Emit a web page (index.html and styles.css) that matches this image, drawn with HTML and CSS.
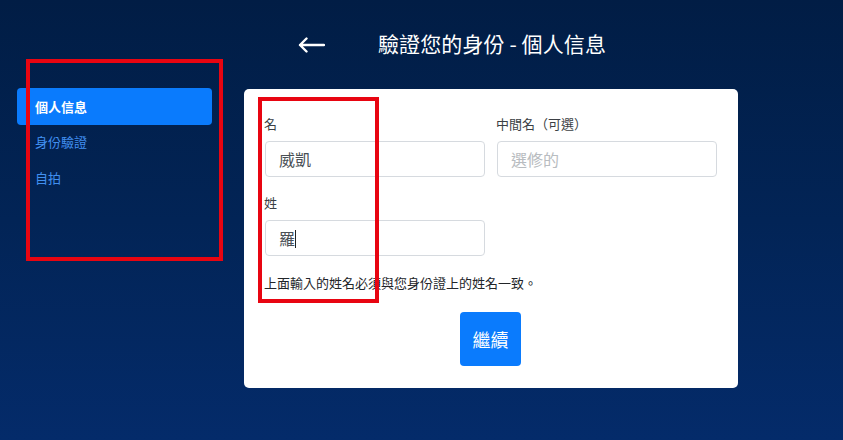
FILE: index.html
```html
<!DOCTYPE html>
<html lang="zh-Hant">
<head>
<meta charset="utf-8">
<title>驗證您的身份 - 個人信息</title>
<link rel="stylesheet" href="styles.css">
</head>
<body>
<header class="header">
  <span class="back" aria-label="返回">
    <svg width="27" height="16" viewBox="0 0 27 16"><path d="M26 8H2M8.5 1.5L2 8l6.5 6.5" fill="none" stroke="#fff" stroke-width="2.4" stroke-linecap="round" stroke-linejoin="round"/></svg>
  </span>
  <h1 class="title">驗證您的身份 - 個人信息</h1>
</header>
<main class="main">
  <nav class="sidebar">
    <a class="nav-item active">個人信息</a>
    <a class="nav-item">身份驗證</a>
    <a class="nav-item">自拍</a>
  </nav>
  <section class="card">
    <div class="grid">
      <div class="field">
        <label class="label">名</label>
        <div class="input">威凱</div>
      </div>
      <div class="field">
        <label class="label">中間名（可選）</label>
        <div class="input placeholder">選修的</div>
      </div>
      <div class="field">
        <label class="label">姓</label>
        <div class="input">羅<span class="caret"></span></div>
      </div>
    </div>
    <p class="help">上面輸入的姓名必須與您身份證上的姓名一致。</p>
    <div class="actions"><button class="btn">繼續</button></div>
  </section>
</main>
<div class="mark mark-side"></div>
<div class="mark mark-form"></div>
</body>
</html>
```

FILE: styles.css
```css
html, body {
  margin: 0;
  padding: 0;
}
body {
  position: relative;
  width: 843px;
  height: 440px;
  overflow: hidden;
  background: linear-gradient(180deg, #011d45 0%, #022456 50%, #042b6a 100%);
  font-family: "Noto Sans CJK TC", "Noto Sans", "Liberation Sans", sans-serif;
  color: #212529;
}
.header {
  display: flex;
  align-items: center;
  height: 86px;
  padding-left: 298px;
  box-sizing: border-box;
}
.back {
  display: flex;
  width: 27px;
  height: 16px;
  margin-top: 4px;
}
.title {
  margin: 0 0 0 53px;
  font-size: 21px;
  font-weight: 400;
  color: #ffffff;
  letter-spacing: 0.1px;
}
.main {
  display: flex;
  align-items: flex-start;
  margin-top: 2px;
  padding-left: 17px;
}
.sidebar {
  display: flex;
  flex-direction: column;
  width: 195px;
}
.nav-item {
  display: block;
  height: 36px;
  line-height: 34px;
  padding-left: 18px;
  font-size: 13px;
  color: #4190f0;
  border-radius: 4px;
}
.nav-item.active {
  height: 37px;
  line-height: 37px;
  background: #0a7bfd;
  color: #ffffff;
  font-weight: 700;
}
.card {
  margin-left: 32px;
  margin-top: 1px;
  width: 494px;
  box-sizing: border-box;
  padding: 25px 21px 22px 20px;
  background: #ffffff;
  border-radius: 5px;
}
.grid {
  display: grid;
  grid-template-columns: 221px 221px;
  column-gap: 11px;
  row-gap: 16px;
}
.field {
  display: flex;
  flex-direction: column;
}
.label {
  font-size: 13px;
  line-height: 20px;
  color: #3b3f44;
  margin-bottom: 7px;
}
.input {
  height: 36px;
  box-sizing: border-box;
  border: 1px solid #d6dadf;
  border-radius: 4px;
  padding: 0 13px;
  font-size: 16px;
  line-height: 34px;
  color: #4a5056;
  margin-left: 1px;
}
.input.placeholder {
  color: #b8bcc0;
}
.caret {
  display: inline-block;
  width: 1px;
  height: 18px;
  background: #222;
  vertical-align: -3px;
}
.help {
  margin: 17px 0 0;
  font-size: 13px;
  line-height: 20px;
  color: #222529;
}
.actions {
  display: flex;
  justify-content: center;
  margin-top: 19px;
}
.btn {
  width: 61px;
  height: 54px;
  border: none;
  border-radius: 4px;
  background: #0a7bfd;
  color: #ffffff;
  font-family: inherit;
  font-size: 18px;
  padding: 0;
}
.mark {
  position: absolute;
  border: 4.5px solid #e80511;
  box-sizing: border-box;
  pointer-events: none;
}
.mark-side {
  left: 26px;
  top: 59px;
  width: 197px;
  height: 202px;
}
.mark-form {
  left: 258px;
  top: 97px;
  width: 121px;
  height: 206px;
}
```
